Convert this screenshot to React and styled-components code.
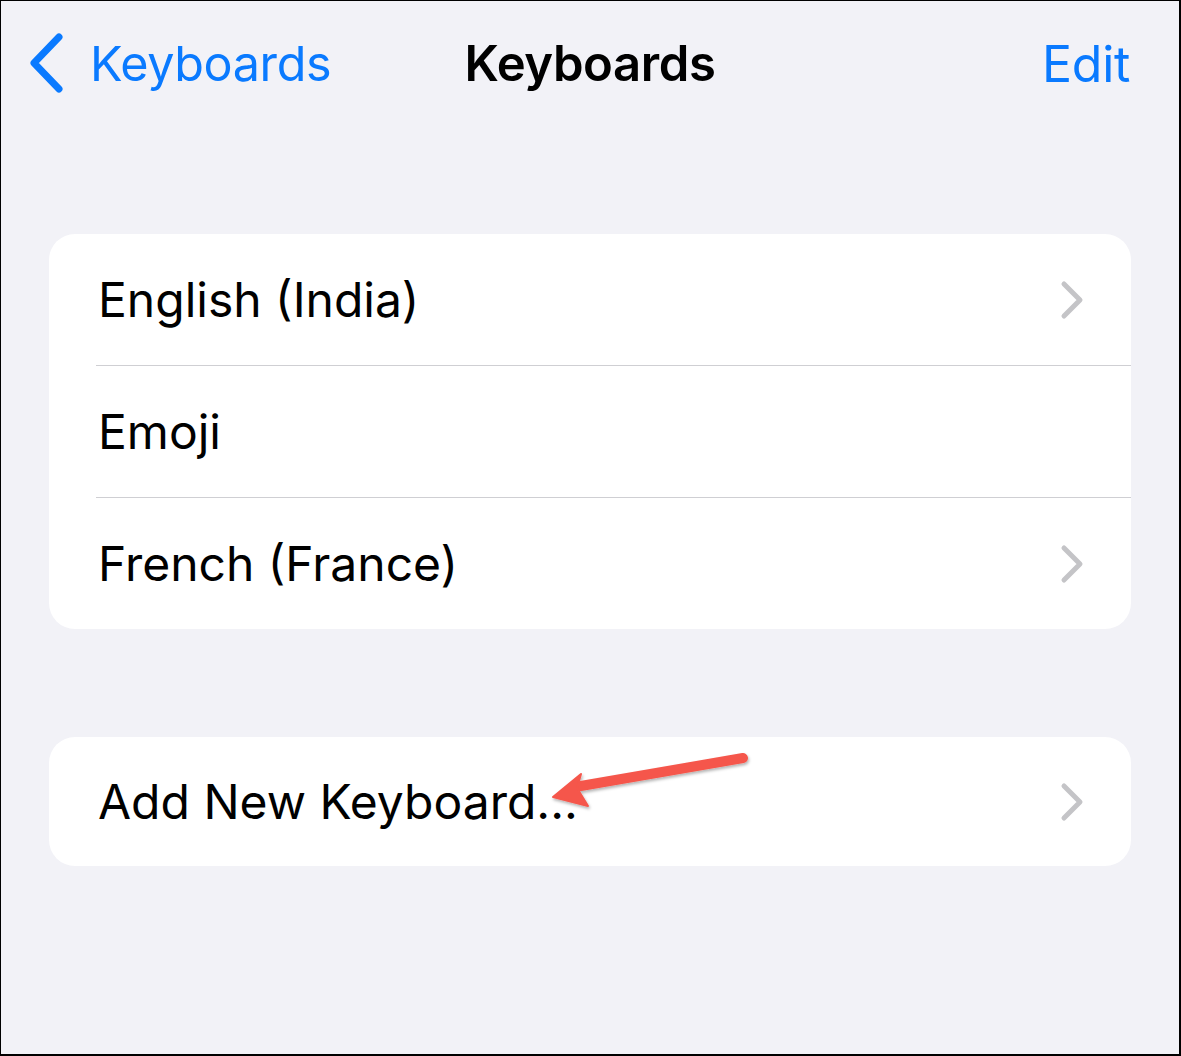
import React from "react";
import styled, { createGlobalStyle } from "styled-components";

const GlobalStyle = createGlobalStyle`
  html, body {
    margin: 0;
    padding: 0;
    background: #ffffff;
  }
  body {
    font-family: Inter, "Noto Sans", "Liberation Sans", sans-serif;
    -webkit-font-smoothing: antialiased;
  }
`;

const Frame = styled.div`
  position: relative;
  box-sizing: border-box;
  width: 1181px;
  height: 1056px;
  background: #f2f2f7;
  border-style: solid;
  border-color: #000000;
  border-width: 1px 2px 2px 1px;
  overflow: hidden;
`;

const NavBar = styled.header`
  display: grid;
  grid-template-columns: 1fr auto 1fr;
  align-items: center;
  height: 125px;
  padding: 0 49px;
`;

const BackButton = styled.div`
  display: flex;
  align-items: center;
  gap: 24px;
  margin-left: -22px;
  color: #0a7aff;
  font-size: 48.5px;
  letter-spacing: -0.4px;
`;

const Title = styled.h1`
  margin: 0;
  font-size: 49px;
  font-weight: 600;
  color: #000000;
  letter-spacing: -0.4px;
`;

const EditButton = styled.div`
  justify-self: end;
  color: #0a7aff;
  font-size: 50px;
  letter-spacing: -0.3px;
`;

const Content = styled.main`
  display: flex;
  flex-direction: column;
  gap: 108px;
  padding: 108px 48px 0 48px;
`;

const Card = styled.section`
  position: relative;
  background: #ffffff;
  border-radius: 26px;
`;

const Row = styled.div`
  display: flex;
  align-items: center;
  justify-content: space-between;
  height: ${(p) => p.$height || 131}px;
  padding: 0 47px 0 49px;
  font-size: 48px;
  color: #000000;
`;

const Divider = styled.div`
  height: 1px;
  margin-left: 47px;
  background: #cfcfd3;
`;

const Arrow = styled.svg`
  position: absolute;
  left: 0;
  top: 0;
  overflow: visible;
  pointer-events: none;
`;

function BackChevron() {
  return (
    <svg width="38" height="62" viewBox="0 0 38 62">
      <path
        d="M31 4 L6 30 L31 56"
        fill="none"
        stroke="#0a7aff"
        strokeWidth="7"
        strokeLinecap="round"
        strokeLinejoin="round"
      />
    </svg>
  );
}

function Disclosure() {
  return (
    <svg width="24" height="40" viewBox="0 0 24 40">
      <path
        d="M4 4 L20 20 L4 36"
        fill="none"
        stroke="#c4c4c7"
        strokeWidth="5"
        strokeLinecap="round"
        strokeLinejoin="round"
      />
    </svg>
  );
}

const keyboards = [
  { name: "English (India)", more: true },
  { name: "Emoji", more: false },
  { name: "French (France)", more: true },
];

export default function App() {
  return (
    <>
      <GlobalStyle />
      <Frame>
        <NavBar>
          <BackButton>
            <BackChevron />
            <span>Keyboards</span>
          </BackButton>
          <Title>Keyboards</Title>
          <EditButton>Edit</EditButton>
        </NavBar>
        <Content>
          <Card>
            {keyboards.map((k, i) => (
              <React.Fragment key={k.name}>
                {i > 0 && <Divider />}
                <Row>
                  <span>{k.name}</span>
                  {k.more && <Disclosure />}
                </Row>
              </React.Fragment>
            ))}
          </Card>
          <Card>
            <Row $height={129}>
              <span>Add New Keyboard...</span>
              <Disclosure />
            </Row>
            {/* annotation arrow pointing at the row */}
            <Arrow width="720" height="90" viewBox="0 0 720 90">
              <defs>
                <filter id="sh" x="-10%" y="-50%" width="120%" height="200%">
                  <feDropShadow dx="1" dy="2" stdDeviation="1.6" floodColor="#000" floodOpacity="0.3" />
                </filter>
              </defs>
              <g filter="url(#sh)" fill="#f5574b" stroke="#f5574b">
                <line x1="526" y1="50" x2="694" y2="21" strokeWidth="10" strokeLinecap="round" />
                <path d="M504 60 L532 37 L528 51 L539 69 Z" strokeWidth="2" strokeLinejoin="round" />
              </g>
            </Arrow>
          </Card>
        </Content>
      </Frame>
    </>
  );
}
